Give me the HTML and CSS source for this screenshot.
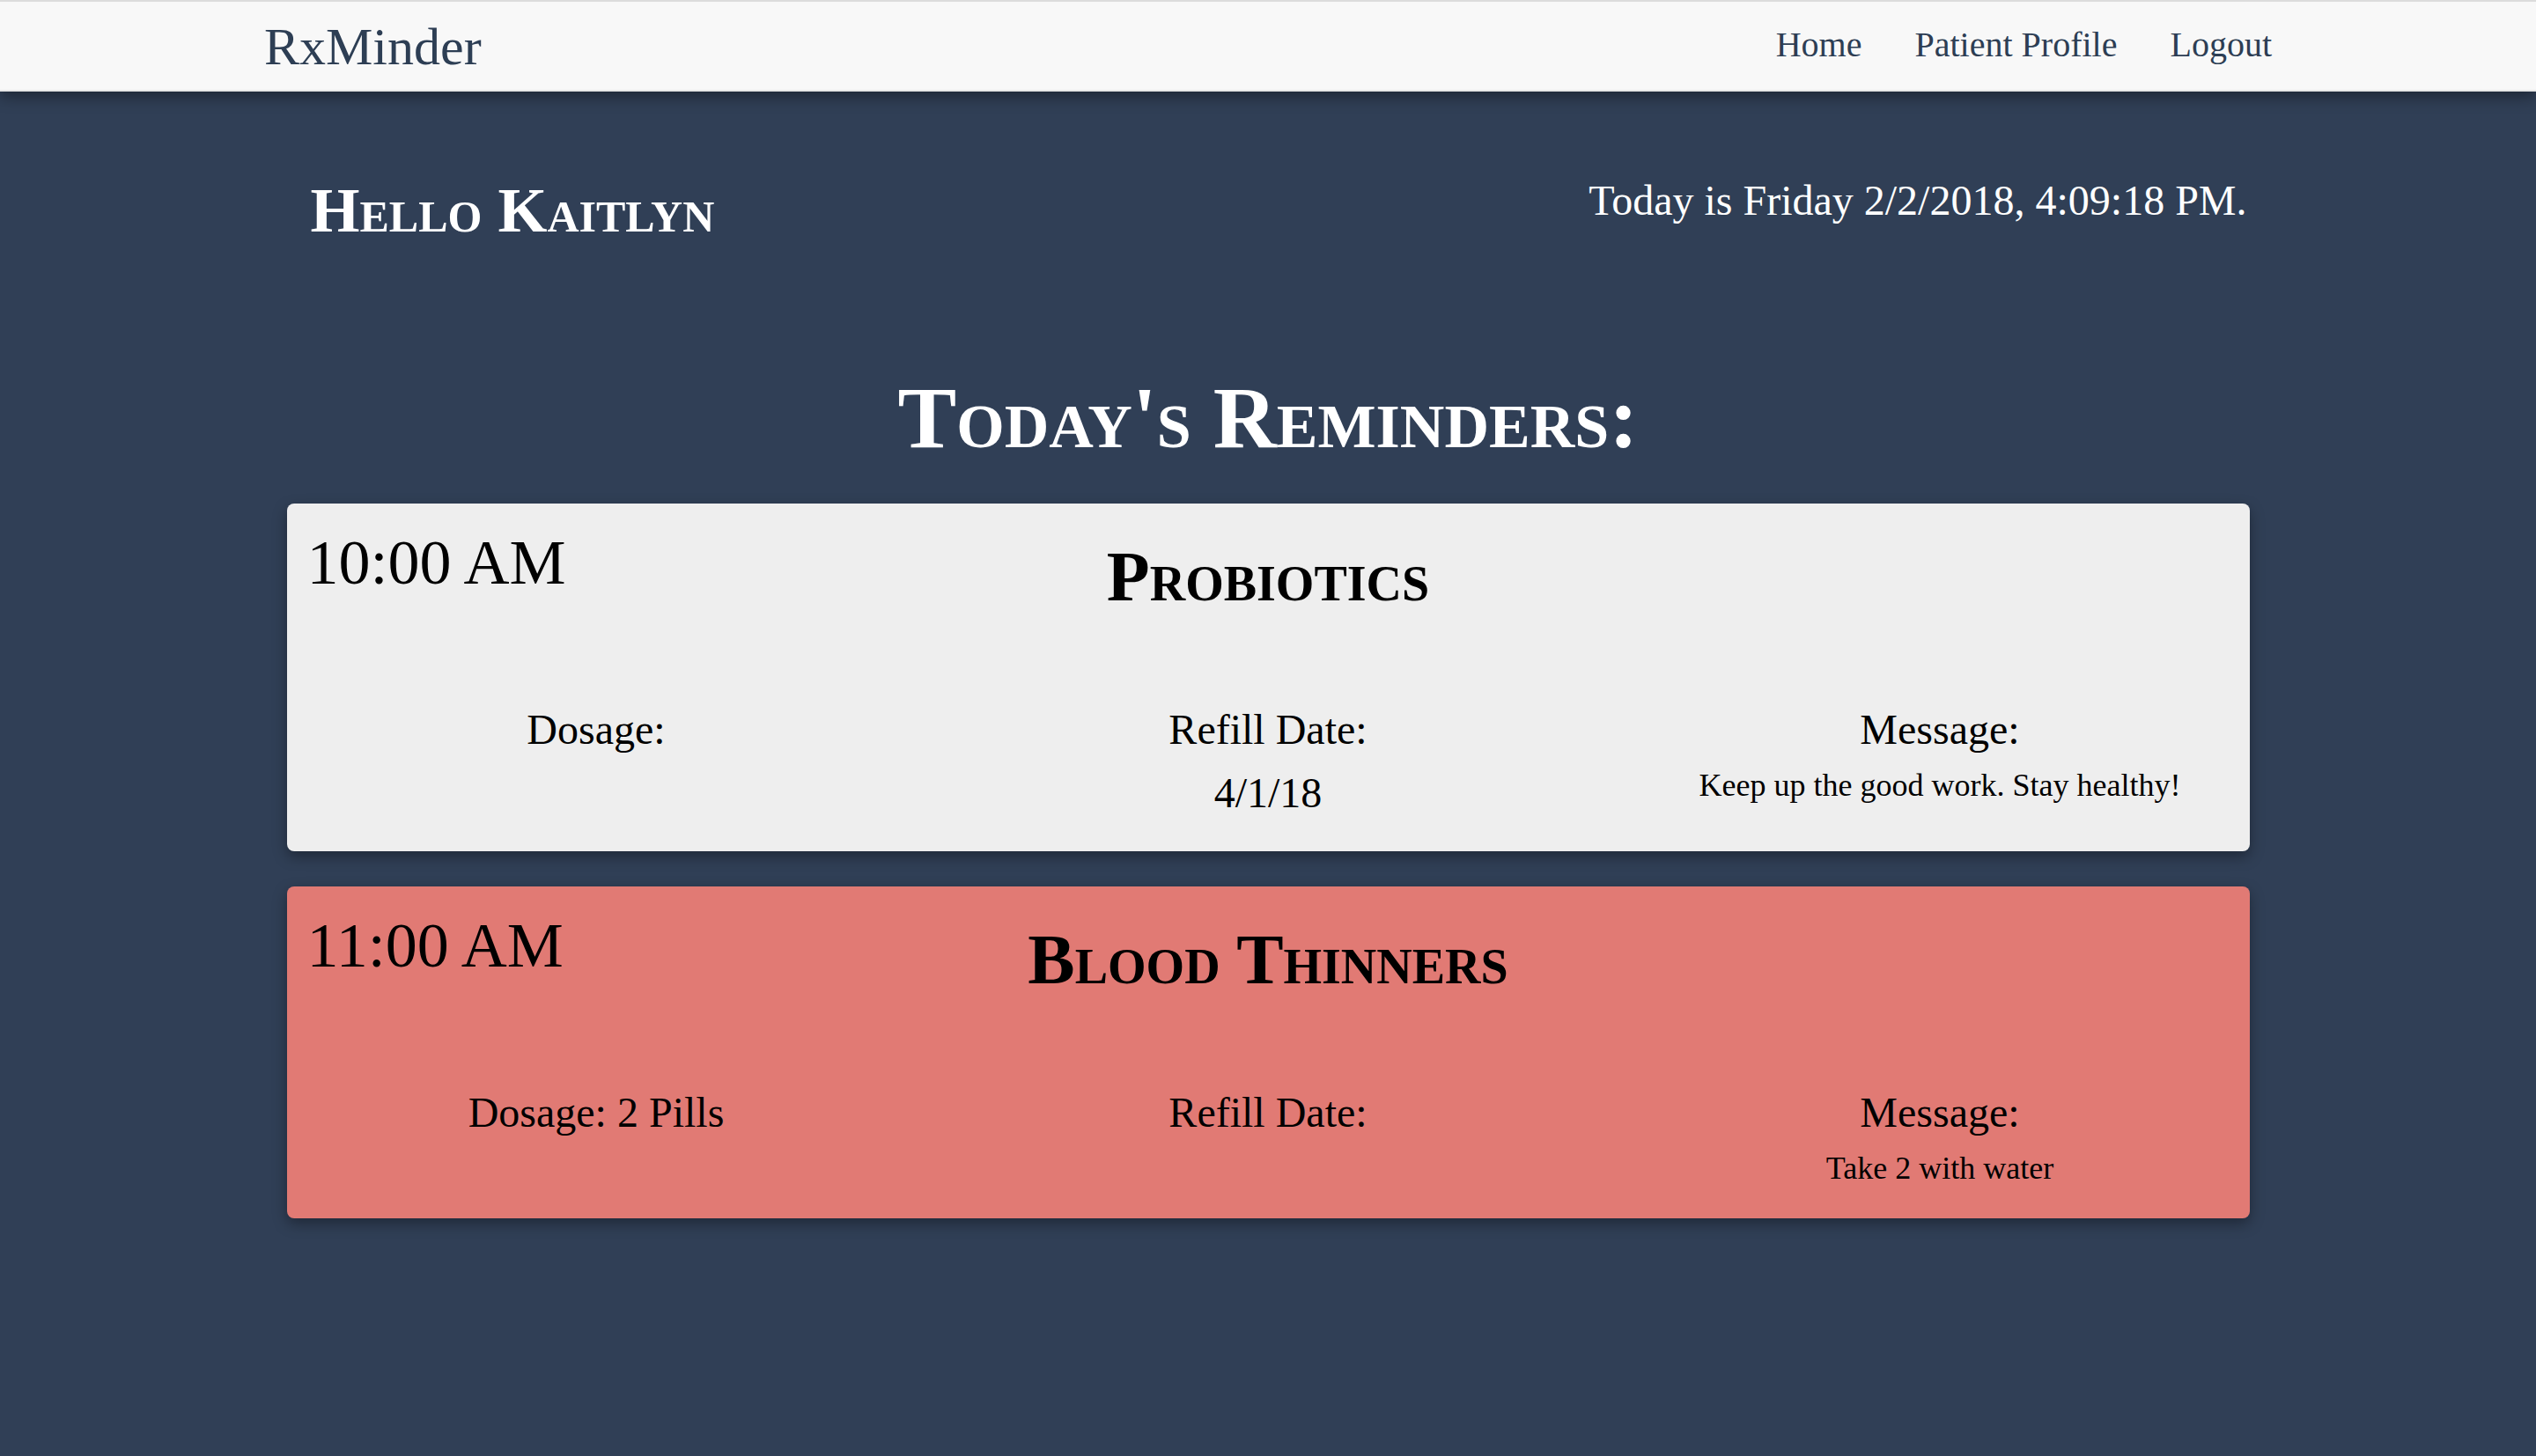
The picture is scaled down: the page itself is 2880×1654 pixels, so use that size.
FILE: index.html
```html
<!DOCTYPE html>
<html lang="en">
<head>
<meta charset="utf-8">
<title>RxMinder</title>
<link rel="stylesheet" href="styles.css">
</head>
<body>
<nav class="navbar">
  <div class="nav-inner">
    <a class="brand" href="#">RxMinder</a>
    <ul class="nav-links">
      <li><a href="#">Home</a></li>
      <li><a href="#">Patient Profile</a></li>
      <li><a href="#">Logout</a></li>
    </ul>
  </div>
</nav>
<main class="main">
  <div class="greeting-row">
    <h1 class="hello">Hello Kaitlyn</h1>
    <h3 class="today">Today is Friday 2/2/2018, 4:09:18 PM.</h3>
  </div>
  <h1 class="title">Today's Reminders:</h1>
  <div class="cards">
    <section class="card card-light">
      <div class="card-head">
        <div class="time">10:00 AM</div>
        <h2 class="med">Probiotics</h2>
        <div></div>
      </div>
      <div class="details">
        <div class="col"><div class="label">Dosage:</div></div>
        <div class="col"><div class="label">Refill Date:</div><div class="value">4/1/18</div></div>
        <div class="col"><div class="label">Message:</div><div class="msg">Keep up the good work. Stay healthy!</div></div>
      </div>
    </section>
    <section class="card card-red">
      <div class="card-head">
        <div class="time">11:00 AM</div>
        <h2 class="med">Blood Thinners</h2>
        <div></div>
      </div>
      <div class="details">
        <div class="col"><div class="label">Dosage: 2 Pills</div></div>
        <div class="col"><div class="label">Refill Date:</div></div>
        <div class="col"><div class="label">Message:</div><div class="msg">Take 2 with water</div></div>
      </div>
    </section>
  </div>
</main>
</body>
</html>
```

FILE: styles.css
```css
* { box-sizing: border-box; }
html, body {
  margin: 0;
  padding: 0;
}
body {
  background: #303f56;
  font-family: "Liberation Serif", "Times New Roman", serif;
  color: #000;
  min-height: 1654px;
}
h1, h2, h3 { margin: 0; font-weight: bold; }

.navbar {
  height: 104px;
  background: #f8f8f8;
  border-top: 2px solid #dcdcdc;
  border-bottom: 2px solid #e7e7e7;
  box-shadow: 0 6px 16px rgba(0, 0, 0, 0.38);
  position: relative;
  z-index: 2;
}
.nav-inner {
  width: 2280px;
  margin: 0 auto;
  height: 100%;
  display: flex;
  align-items: flex-start;
  justify-content: space-between;
}
.brand {
  font-size: 60px;
  line-height: 66px;
  color: #2d3e54;
  text-decoration: none;
  margin-top: 18px;
}
.nav-links {
  list-style: none;
  margin: 0 -30px 0 0;
  padding: 0;
  display: flex;
}
.nav-links a {
  display: block;
  padding: 0 30px;
  font-size: 40px;
  line-height: 44px;
  margin-top: 27px;
  color: #2d3e54;
  text-decoration: none;
}

.main {
  width: 2229px;
  margin: 0 auto;
  padding-top: 96px;
}
.greeting-row {
  display: flex;
  justify-content: space-between;
  align-items: flex-start;
  padding: 0 3px 0 27px;
  color: #fff;
}
.hello {
  font-size: 72px;
  line-height: 1.1;
  font-variant: small-caps;
}
.today {
  font-size: 48px;
  line-height: 1.1;
  font-weight: normal;
  margin-top: 2px;
}
.title {
  margin-top: 141px;
  font-size: 100px;
  line-height: 1.1;
  font-variant: small-caps;
  text-align: center;
  color: #fff;
}
.cards {
  margin-top: 42px;
  display: flex;
  flex-direction: column;
  gap: 40px;
}
.card {
  border-radius: 8px;
  padding-bottom: 30px;
  box-shadow: 0 6px 16px rgba(0, 0, 0, 0.35);
}
.card-light { background: #eeeeee; }
.card-red { background: #e17a74; }

.card-head {
  display: grid;
  grid-template-columns: 1fr auto 1fr;
  align-items: start;
}
.time {
  font-size: 72px;
  line-height: 1.1;
  padding-top: 28px;
  padding-left: 23px;
}
.med {
  font-size: 80px;
  line-height: 1.1;
  margin-top: 39px;
  font-variant: small-caps;
  text-align: center;
}
.details {
  margin: 94px -30px 0;
  display: grid;
  grid-template-columns: repeat(3, 1fr);
  text-align: center;
}
.label, .value {
  font-size: 48px;
  line-height: 72px;
}
.msg {
  font-size: 36px;
  line-height: 54px;
}
```
